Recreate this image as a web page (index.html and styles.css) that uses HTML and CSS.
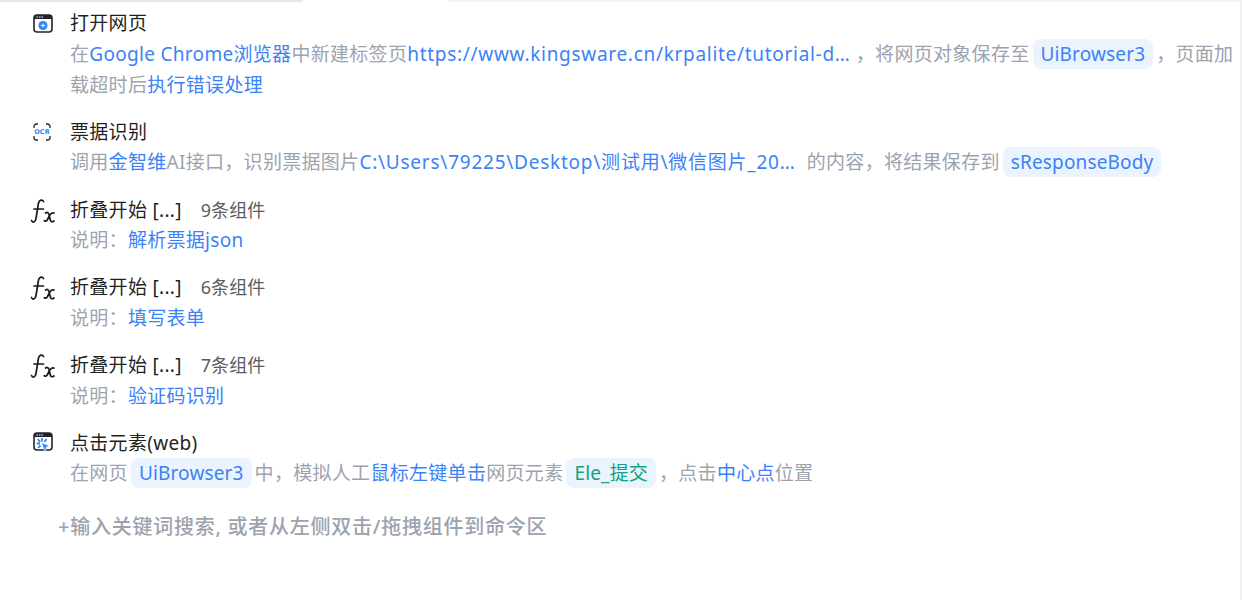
FILE: index.html
```html
<!DOCTYPE html>
<html lang="en">
<head>
  <meta charset="UTF-8">
  <title>命令区</title>
  <link rel="stylesheet" href="styles.css">
</head>
<body>
  <svg class="defs" width="0" height="0">
    <symbol id="fx" viewBox="0 0 28 28">
      <path d="M13.500 5.500C12.500 3.300 9.300 3.500 8.500 7L6 22.500C5.400 26.500 2.500 27 1.500 24.500M4 13h9.500" fill="none" stroke="#1a1a1a" stroke-width="1.700" stroke-linecap="round"/>
      <path d="M15.500 17c2-1.200 3-.3 3.600 2l1.200 5c.5 2 1.800 2.200 3.700 1M24 17c-2-.8-3 0-4.500 2.500l-2 4c-.8 1.500-2 2-3.200 1.200" fill="none" stroke="#1a1a1a" stroke-width="1.700" stroke-linecap="round"/>
    </symbol>
  </svg>

  <div class="top-strip">
    <span class="strip-a"></span>
    <span class="strip-b"></span>
    <span class="strip-c"></span>
  </div>

  <section class="command-list">
    <div class="command first">
      <div class="icon">
        <svg width="20" height="19" viewBox="0 0 20 19">
          <rect x="1" y="1" width="18" height="17" rx="3" fill="#fff" stroke="#23232f" stroke-width="1.600"/>
          <path d="M1 5V4a3 3 0 0 1 3-3h12a3 3 0 0 1 3 3v1z" fill="#23232f"/>
          <path d="M3.500 3h1.500M6 3h1.500M8.500 3h1.500" stroke="#fff" stroke-width="1.100"/>
          <circle cx="10" cy="11.500" r="4.500" fill="#2f86f0"/>
          <path d="M7.800 11.500h4.400M10 9.700v3.600" stroke="#fff" stroke-width="1.200"/>
        </svg>
      </div>
      <div class="body">
        <div class="title">打开网页</div>
        <div class="desc">在<a>Google Chrome浏览器</a>中新建标签页<a class="long">https://www.kingsware.cn/krpalite/tutorial-d…</a> ，将网页对象保存至<span class="tag">UiBrowser3</span>，页面加载超时后<a>执行错误处理</a></div>
      </div>
    </div>

    <div class="command">
      <div class="icon">
        <svg width="18" height="18" viewBox="0 0 18 18">
          <path d="M1 5V3.500A2.500 2.500 0 0 1 3.500 1H5M13 1h1.500A2.500 2.500 0 0 1 17 3.500V5M17 13v1.500a2.500 2.500 0 0 1-2.500 2.500H13M5 17H3.500A2.500 2.500 0 0 1 1 14.500V13" fill="none" stroke="#23232f" stroke-width="1.300"/>
          <text x="9" y="11.300" text-anchor="middle" class="ocr">OCR</text>
        </svg>
      </div>
      <div class="body">
        <div class="title">票据识别</div>
        <div class="desc">调用<a>金智维</a>AI接口，识别票据图片<a class="long path">C:\Users\79225\Desktop\测试用\微信图片_20…</a> 的内容，将结果保存到<span class="tag">sResponseBody</span></div>
      </div>
    </div>

    <div class="command">
      <div class="icon"><svg class="fx" width="28" height="28"><use href="#fx"/></svg></div>
      <div class="body">
        <div class="title">折叠开始 [...]<span class="count">9条组件</span></div>
        <div class="desc">说明：<a>解析票据json</a></div>
      </div>
    </div>

    <div class="command">
      <div class="icon"><svg class="fx" width="28" height="28"><use href="#fx"/></svg></div>
      <div class="body">
        <div class="title">折叠开始 [...]<span class="count">6条组件</span></div>
        <div class="desc">说明：<a>填写表单</a></div>
      </div>
    </div>

    <div class="command">
      <div class="icon"><svg class="fx" width="28" height="28"><use href="#fx"/></svg></div>
      <div class="body">
        <div class="title">折叠开始 [...]<span class="count">7条组件</span></div>
        <div class="desc">说明：<a>验证码识别</a></div>
      </div>
    </div>

    <div class="command">
      <div class="icon">
        <svg width="20" height="22" viewBox="0 0 20 22">
          <rect x="1" y="1" width="18" height="17" rx="3" fill="#fff" stroke="#23232f" stroke-width="1.600"/>
          <path d="M1 5V4a3 3 0 0 1 3-3h12a3 3 0 0 1 3 3v1z" fill="#23232f"/>
          <path d="M3.500 3h1.500M6 3h1.500M8.500 3h1.500" stroke="#fff" stroke-width="1.100"/>
          <path d="M9 6v3.500M4.800 7.200l2.500 2.800M3.800 11.500h3.200M5 15.800l2.500-2.300M13.500 7.200l-2.200 2.600" stroke="#2f86f0" stroke-width="1.800"/>
          <path d="M8.500 10.500l8 3.500-3.300 1.200-1.200 5z" fill="#2f86f0" stroke="#fff" stroke-width=".6"/>
        </svg>
      </div>
      <div class="body">
        <div class="title">点击元素(web)</div>
        <div class="desc">在网页<span class="tag">UiBrowser3</span>中，模拟人工<a>鼠标左键单击</a>网页元素<span class="tag green">Ele_提交</span>，点击<a>中心点</a>位置</div>
      </div>
    </div>
  </section>

  <div class="add-hint">+输入关键词搜索, 或者从左侧双击/拖拽组件到命令区</div>
</body>
</html>
```

FILE: styles.css
```css
* {
  box-sizing: border-box;
}

body {
  margin: 0;
  height: 600px;
  overflow: hidden;
  background: #fff;
  border-right: 2px solid #f0f0f3;
  font-family: "Noto Sans", "Noto Sans CJK SC", sans-serif;
  font-size: 19px;
  letter-spacing: .3px;
  color: #9ca3af;
}

.defs {
  display: block;
}

.top-strip {
  display: flex;
  height: 2px;
}

.strip-a {
  width: 303px;
  background: #e6e7ee;
}

.strip-b {
  width: 145px;
}

.strip-c {
  flex: 1;
  background: #f3f3f6;
}

.command-list {
  padding-left: 30px;
}

.command {
  display: flex;
  margin-top: 16.300px;
}

.command.first {
  margin-top: 6px;
}

.icon {
  width: 40px;
  height: 30px;
  flex: none;
  display: flex;
  align-items: center;
  justify-content: flex-start;
  padding-left: 3px;
}

.icon .fx {
  margin-left: -3px;
}

.ocr {
  font-family: "DejaVu Sans", sans-serif;
  font-size: 6.500px;
  font-weight: 700;
  letter-spacing: 0;
  fill: #2f86f0;
}

.body {
  flex: 1;
  min-width: 0;
}

.title {
  height: 30.500px;
  line-height: 30px;
  color: #1f1f1f;
}

.count {
  margin-left: 19px;
  font-size: 18px;
  letter-spacing: .1px;
  color: #5c5c5c;
}

.desc {
  line-height: 31px;
}

.desc a {
  color: #3b82f6;
}

.desc a.long {
  letter-spacing: .7px;
}

.desc a.path {
  letter-spacing: .76px;
  margin-right: 6px;
}

.tag {
  display: inline-block;
  height: 30px;
  line-height: 30px;
  margin: 0 3px 0 3px;
  padding: 0 8px;
  border-radius: 8px;
  background: #ebf3fe;
  letter-spacing: .15px;
  color: #3b82f6;
}

.tag.green {
  color: #10a37f;
}

.add-hint {
  margin: 23px 0 0 58px;
  line-height: 30px;
  font-size: 20px;
  letter-spacing: .75px;
  font-weight: 500;
  color: #9ca3af;
}
```
